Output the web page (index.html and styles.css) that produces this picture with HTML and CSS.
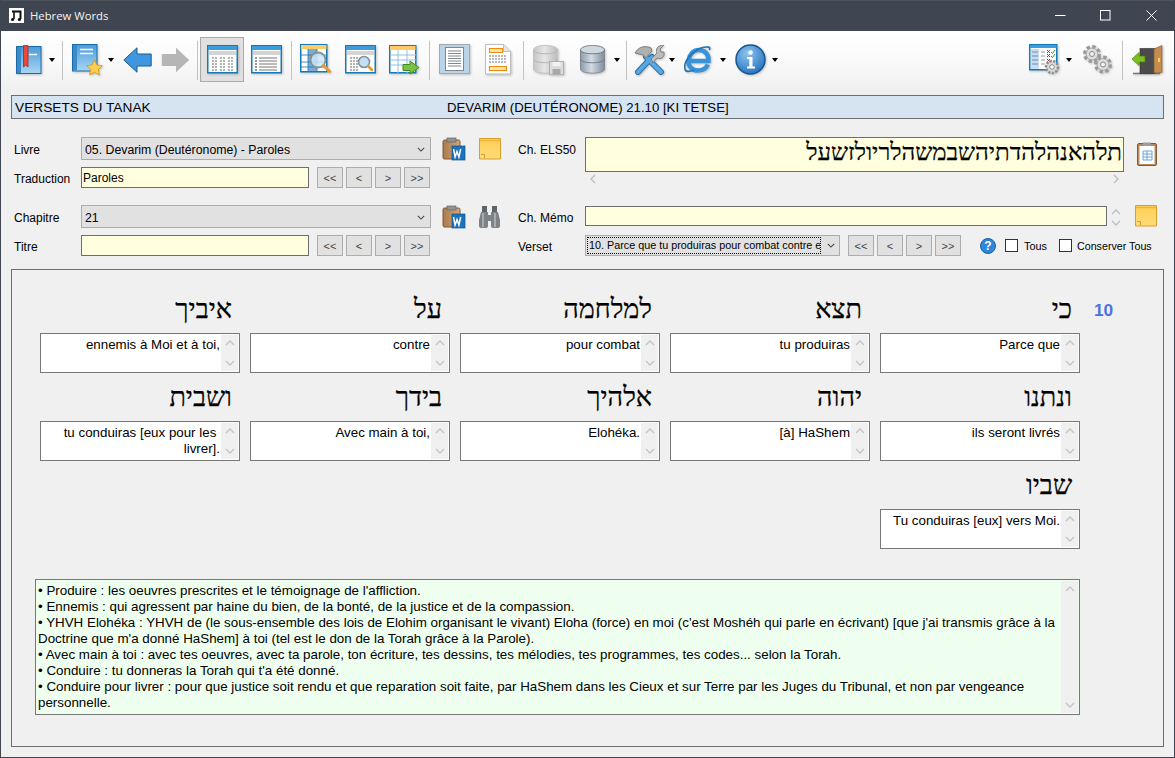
FILE: index.html
```html
<!DOCTYPE html>
<html lang="fr">
<head>
<meta charset="utf-8">
<title>Hebrew Words</title>
<link rel="stylesheet" href="styles.css">
</head>
<body>
<svg class="defs" aria-hidden="true">
  <defs>
    <linearGradient id="gBook" x1="0" y1="0" x2="0" y2="1"><stop offset="0" stop-color="#4a9bd9"/><stop offset="1" stop-color="#a9d6f3"/></linearGradient>
    <linearGradient id="gDb" x1="0" y1="0" x2="1" y2="0"><stop offset="0" stop-color="#8d9aa8"/><stop offset=".45" stop-color="#d3dbe3"/><stop offset="1" stop-color="#7f8c9a"/></linearGradient>
    <linearGradient id="gDbOff" x1="0" y1="0" x2="1" y2="0"><stop offset="0" stop-color="#c4c4c4"/><stop offset=".45" stop-color="#e6e6e6"/><stop offset="1" stop-color="#bcbcbc"/></linearGradient>
    <linearGradient id="gNote" x1="0" y1="0" x2="0" y2="1"><stop offset="0" stop-color="#ffcf55"/><stop offset="1" stop-color="#ffdb78"/></linearGradient>
    <radialGradient id="gInfo" cx=".4" cy=".3" r=".8"><stop offset="0" stop-color="#8cc4f0"/><stop offset="1" stop-color="#1f6cb8"/></radialGradient>
    <linearGradient id="gClip" x1="0" y1="0" x2="1" y2="0"><stop offset="0" stop-color="#a87a4c"/><stop offset="1" stop-color="#d6a878"/></linearGradient>
    <symbol id="chev-d" viewBox="0 0 10 6"><path d="M1 1l4 4 4-4" fill="none" stroke="currentColor" stroke-width="1.3"/></symbol>
    <symbol id="chev-u" viewBox="0 0 10 6"><path d="M1 5l4-4 4 4" fill="none" stroke="currentColor" stroke-width="1.3"/></symbol>
    <symbol id="chev-l" viewBox="0 0 6 10"><path d="M5 1L1 5l4 4" fill="none" stroke="currentColor" stroke-width="1.3"/></symbol>
    <symbol id="chev-r" viewBox="0 0 6 10"><path d="M1 1l4 4-4 4" fill="none" stroke="currentColor" stroke-width="1.3"/></symbol>
    <symbol id="clip-word" viewBox="0 0 24 24">
      <rect x="1" y="3" width="17" height="19" rx="1.5" fill="url(#gClip)" stroke="#7d5a38"/>
      <rect x="5" y="1" width="9" height="4" fill="#8f9297" stroke="#62656a" stroke-width=".7"/>
      <rect x="10" y="9" width="13" height="14" fill="#1c73bd" stroke="#0f4f8a" stroke-width=".7"/>
      <path d="M11.5 12l1.6 8 1.9-5.5 1.9 5.5 1.8-8" fill="none" stroke="#fff" stroke-width="1.5"/>
    </symbol>
    <symbol id="note" viewBox="0 0 22 22">
      <path d="M.5.5h21v20.5H.5z" fill="url(#gNote)" stroke="#d99f2d"/>
      <path d="M1 2.5h20" stroke="#eeb53e" stroke-width="1.5"/>
      <path d="M2 16.5h3.5V20" fill="none" stroke="#c98f20" stroke-width=".8"/>
    </symbol>
  </defs>
</svg>
<div class="window">
  <header class="titlebar">
    <svg class="app-icon" width="15" height="15" viewBox="0 0 15 15"><rect width="15" height="15" fill="#fff"/><path d="M3 3.500h8.500V11" fill="none" stroke="#111" stroke-width="2"/><path d="M5 3.500V11" stroke="#111" stroke-width="1.600"/><circle cx="3.600" cy="11.500" r="1.600" fill="#111"/><circle cx="10.400" cy="11.500" r="1.600" fill="#111"/></svg>
    <span class="app-title">Hebrew Words</span>
    <div class="winctl">
      <span class="winbtn"><svg width="11" height="11" viewBox="0 0 11 11"><path d="M0 5.5h10.500" stroke="#fff"/></svg></span>
      <span class="winbtn"><svg width="11" height="11" viewBox="0 0 11 11"><rect x=".5" y=".5" width="9.500" height="9.500" fill="none" stroke="#fff"/></svg></span>
      <span class="winbtn"><svg width="11" height="11" viewBox="0 0 11 11"><path d="M.5.5l10 10M10.500.5l-10 10" stroke="#fff"/></svg></span>
    </div>
  </header>

  <nav class="toolbar">
    <span class="tb w39"><svg width="26" height="30" viewBox="0 0 26 30"><rect x=".5" y="1.500" width="24.500" height="27" fill="url(#gBook)" stroke="#1d6ba6"/><rect x="1" y="2" width="4" height="26" fill="#3a8cc9"/><path d="M13 9.500h8" stroke="#fff" stroke-width="1.400"/><path d="M7.500.5h4.500V22l-2.200-2-2.300 2z" fill="#e8493a" stroke="#a8281c" stroke-width=".8"/></svg></span>
    <span class="dd w8"></span>
    <span class="sep ml6 mr5"></span>
    <span class="tb w38"><svg width="31" height="32" viewBox="0 0 31 32"><rect x=".5" y=".5" width="24.500" height="26.500" fill="url(#gBook)" stroke="#1d6ba6"/><rect x="1" y="1" width="4" height="25.500" fill="#3a8cc9"/><path d="M8 5.500h13M8 9.500h13" stroke="#fff" stroke-width="1.300"/><path d="M22.500 16l2.400 4.900 5.400.8-3.900 3.800.9 5.400-4.800-2.500-4.800 2.500.9-5.400-3.900-3.800 5.400-.8z" fill="#ffcd4a" stroke="#c8932a" stroke-width=".8"/></svg></span>
    <span class="dd w10"></span>
    <span class="tb w42 flat"><svg width="29" height="26" viewBox="0 0 29 26"><path d="M.8 13L14 .8V7h14.200v12H14v6.200z" fill="#3f97df" stroke="#1d5c8f"/></svg></span>
    <span class="tb w34 flat"><svg width="29" height="26" viewBox="0 0 29 26"><path d="M28.200 13L15 .8V7H.8v12H15v6.200z" fill="#b6b6b6"/></svg></span>
    <span class="sep ml5 mr2"></span>
    <span class="tb w44 selected"><svg width="31" height="29" viewBox="0 0 31 29"><rect x=".75" y=".75" width="29.500" height="27" fill="#fff" stroke="#157bb8" stroke-width="1.500"/><rect x="1" y="1" width="29" height="4" fill="#3d9cdc"/><rect x="2" y="6" width="27" height="4" fill="#d4d4d4"/><path d="M5 13h6M13 13h6M21 13h6M5 16h6M13 16h6M21 16h6M5 19h6M13 19h6M21 19h6M5 22h6M13 22h6M21 22h6M5 25h6M13 25h6M21 25h6" stroke="#666" stroke-dasharray="2 1"/></svg></span>
    <span class="tb w44"><svg width="31" height="29" viewBox="0 0 31 29"><rect x=".75" y=".75" width="29.500" height="27" fill="#fff" stroke="#157bb8" stroke-width="1.500"/><rect x="1" y="1" width="29" height="4" fill="#3d9cdc"/><rect x="2" y="6" width="27" height="4" fill="#d4d4d4"/><path d="M8 13h18M8 16h18M8 19h18M8 22h18M8 25h18" stroke="#777"/><path d="M4 13h2M4 16h2M4 19h2M4 22h2M4 25h2" stroke="#333"/></svg></span>
    <span class="sep ml3 mr2"></span>
    <span class="tb w44"><svg width="32" height="32" viewBox="0 0 32 32"><rect x=".75" y=".75" width="26" height="27" fill="#fff" stroke="#157bb8" stroke-width="1.500"/><rect x="1" y="1" width="25.500" height="4" fill="#ffcb66"/><rect x="8" y="5" width="9" height="22" fill="#7ba9d8"/><path d="M1 11h26M1 18h26M1 23h26M8 5v22M17 5v22" stroke="#157bb8" stroke-width=".8"/><circle cx="18" cy="16" r="7.500" fill="#cde6f7" fill-opacity=".85" stroke="#8a8f94" stroke-width="1.800"/><path d="M23.500 21.500l6 6" stroke="#e69a2c" stroke-width="3" stroke-linecap="round"/></svg></span>
    <span class="tb w44"><svg width="31" height="29" viewBox="0 0 31 29"><rect x=".75" y=".75" width="29.500" height="27" fill="#fff" stroke="#157bb8" stroke-width="1.500"/><rect x="1" y="1" width="29" height="4" fill="#3d9cdc"/><rect x="2" y="6" width="27" height="4" fill="#d4d4d4"/><path d="M5 13h8M5 16h8M5 19h8M5 22h8M5 25h8" stroke="#666" stroke-dasharray="2 1"/><circle cx="19" cy="17" r="5.500" fill="#bfe0f6" stroke="#8a8f94" stroke-width="1.600"/><path d="M23 21l4 4" stroke="#e69a2c" stroke-width="2.600" stroke-linecap="round"/></svg></span>
    <span class="tb w44"><svg width="31" height="30" viewBox="0 0 31 30"><rect x=".75" y=".75" width="26" height="27" fill="#fff" stroke="#157bb8" stroke-width="1.500"/><rect x="1" y="1" width="25.500" height="4" fill="#ffcb66"/><path d="M1 10h26M1 15h26M1 20h26M9 5v23M18 5v23" stroke="#8fc0e4"/><path d="M14 19.500h7V16l9 6.500-9 6.500v-3.500h-7z" fill="#7cc242" stroke="#3f8a1c"/></svg></span>
    <span class="sep ml3 mr2"></span>
    <span class="tb w44"><svg width="31" height="31" viewBox="0 0 31 31"><rect x=".5" y=".5" width="30" height="29" fill="#b9d3e8" stroke="#a8a8a8"/><rect x="6.500" y="3.500" width="18" height="23" fill="#fff" stroke="#7d8790"/><path d="M9 7h13M9 9.500h13M9 12h13M9 14.500h13M9 17h13M9 19.500h13M9 22h13" stroke="#7d8790"/></svg></span>
    <span class="tb w44"><svg width="26" height="31" viewBox="0 0 26 31"><path d="M.5.5h18l7 7v22.500H.5z" fill="#fff" stroke="#bdbdbd"/><path d="M18.500.5v7h7" fill="#e6e6e6" stroke="#bdbdbd"/><rect x="4.500" y="4.500" width="13" height="4" fill="#ffe3ad" stroke="#ee8a10"/><rect x="4.500" y="22.500" width="17" height="4" fill="#ffe3ad" stroke="#ee8a10"/><path d="M4 12h18M4 15h18M4 18h18" stroke="#777" stroke-dasharray="2 1"/></svg></span>
    <span class="sep ml3 mr2"></span>
    <span class="tb w44"><svg width="31" height="30" viewBox="0 0 31 30"><path d="M.5 5c0-6 24-6 24 0v19c0 5.500-24 5.500-24 0z" fill="url(#gDbOff)" stroke="#c4c4c4"/><path d="M.5 5c0 5 24 5 24 0M.5 14c0 5 24 5 24 0" fill="none" stroke="#b4b4b4"/><rect x="16.500" y="16.500" width="14" height="13" fill="#dcdcdc" stroke="#b0b0b0"/><rect x="19.500" y="17" width="8" height="4" fill="#f2f2f2"/><rect x="19.500" y="24" width="8" height="5" fill="#a8a8a8"/></svg></span>
    <span class="tb w44"><svg width="25" height="30" viewBox="0 0 25 30"><path d="M.5 5c0-6 24-6 24 0v19c0 5.500-24 5.500-24 0z" fill="url(#gDb)" stroke="#7f8b97"/><ellipse cx="12.500" cy="5" rx="11.500" ry="3.800" fill="#cfd7df"/><path d="M.5 5c0 5 24 5 24 0M.5 14c0 5 24 5 24 0" fill="none" stroke="#6f7b87"/></svg></span>
    <span class="dd w5"></span>
    <span class="sep ml7 mr2"></span>
    <span class="tb w40"><svg width="31" height="30" viewBox="0 0 31 30"><path d="M12 12l15 15M18 12L4 27" stroke="#2a6ea8" stroke-width="6" stroke-linecap="round"/><path d="M12 12l15 15M18 12L4 27" stroke="#58a8e4" stroke-width="4" stroke-linecap="round"/><path d="M1 8C4 2 11 0 17 3l1 3-6 7-3-3C6 9 4 9 1 8z" fill="#b0b0b0" stroke="#6d6d6d" stroke-width=".8"/><path d="M17 14l6-6c-2-4 1-8 7-8l-4 4 1 3 3 0c1 5-3 8-7 6l-4 5z" fill="#bcbcbc" stroke="#6d6d6d" stroke-width=".8"/></svg></span>
    <span class="dd w5"></span>
    <span class="tb w44 ml2"><svg width="29" height="30" viewBox="0 0 29 30"><path d="M4 16h20.500c.5-7-4-11-9.500-11S5.500 9 4.500 15.500c-.7 5.500 3.500 10 9.500 10 4.500 0 8-2 10-6" fill="none" stroke="#3a93d8" stroke-width="4.600"/><path d="M25 5C28 2 23 1 17 3 9 6-1 16 1 24c.6 3 4 3 9 1" fill="none" stroke="#1f74ba" stroke-width="1.600"/></svg></span>
    <span class="dd w5"></span>
    <span class="tb w44 ml3"><svg width="31" height="31" viewBox="0 0 31 31"><circle cx="15.500" cy="15.500" r="14.500" fill="url(#gInfo)" stroke="#14568f" stroke-width="1.500"/><circle cx="15.500" cy="8.500" r="2.300" fill="#fff"/><path d="M12 13h5.500v9.500H20v2h-8v-2h2.300V15H12z" fill="#fff"/></svg></span>
    <span class="dd w6"></span>
    <span class="spacer"></span>
    <span class="tb w44"><svg width="31" height="31" viewBox="0 0 31 31"><rect x=".75" y=".75" width="27" height="25" fill="#fff" stroke="#157bb8" stroke-width="1.500"/><rect x="1" y="1" width="26.500" height="3" fill="#3d9cdc"/><rect x="2" y="5" width="8" height="20" fill="#c9dcee"/><path d="M3 8h6M3 12h6M3 16h6M3 20h6" stroke="#5a8fc0"/><path d="M12 8h4M12 12h4M12 16h4M12 20h4" stroke="#999"/><path d="M18 6l3 3M21 6l-3 3M18 10l3 3M21 10l-3 3M18 15l3 3M21 15l-3 3" stroke="#cc2a20"/><path d="M22 8l1.500 1.500L26 6M22 12l1.500 1.500L26 10" fill="none" stroke="#3f9a2c"/><circle cx="23" cy="23" r="6" fill="#dcdcdc" stroke="#8d8d8d" stroke-width="2.600" stroke-dasharray="2.200 1.400"/><circle cx="23" cy="23" r="2.300" fill="#fff" stroke="#888"/></svg></span>
    <span class="dd w5"></span>
    <span class="tb w44 ml4"><svg width="31" height="31" viewBox="0 0 31 31"><circle cx="10" cy="10" r="7" fill="#d9d9d9" stroke="#9a9a9a" stroke-width="4" stroke-dasharray="3.200 2.300"/><circle cx="10" cy="10" r="5.800" fill="#dedede" stroke="#999" stroke-width=".6"/><circle cx="10" cy="10" r="2.500" fill="#f2f2f2" stroke="#888"/><circle cx="21" cy="20.500" r="7" fill="#d9d9d9" stroke="#9a9a9a" stroke-width="4" stroke-dasharray="3.200 2.300"/><circle cx="21" cy="20.500" r="5.800" fill="#dedede" stroke="#999" stroke-width=".6"/><circle cx="21" cy="20.500" r="2.500" fill="#f2f2f2" stroke="#888"/></svg></span>
    <span class="sep ml3 mr2"></span>
    <span class="tb w44"><svg width="31" height="30" viewBox="0 0 31 30"><path d="M1 28.500h27" stroke="#777" stroke-width="1.500"/><rect x="8" y="3.500" width="15" height="25" fill="#4b4b4b" stroke="#333" stroke-width=".6"/><path d="M22 4l8-3.500v27L22 28z" fill="#c48c50" stroke="#8a5d30" stroke-width=".7"/><rect x="26" y="13" width="2" height="4" fill="#ffd24a"/><path d="M0 14l7-6.500V11h6v6H7v3.500z" fill="#7dc11f" stroke="#4c8510" stroke-width=".7"/></svg></span>
  </nav>

  <div class="strip"><span class="strip-left">VERSETS DU TANAK</span><span class="strip-center">DEVARIM (DEUTÉRONOME) 21.10 [KI TETSE]</span></div>

  <section class="form">
    <div class="form-block">
      <label class="lbl row1">Livre</label>
      <div class="combo w350 row1"><span>05. Devarim (Deutéronome) - Paroles</span><svg class="combo-chev" width="8" height="5"><use href="#chev-d"/></svg></div>
      <div class="icons row1"><svg width="24" height="24"><use href="#clip-word"/></svg><svg class="ml13" width="22" height="22"><use href="#note"/></svg></div>
      <label class="lbl row1">Ch. ELS50</label>
      <div class="els-wrap">
        <div class="els-col">
          <div class="els" dir="rtl" lang="he">תלהאנהלהדתיהשבמשהלריולזשעל</div>
          <div class="hscroll"><svg width="6" height="10"><use href="#chev-l"/></svg><svg width="6" height="10"><use href="#chev-r"/></svg></div>
        </div>
        <svg class="clip-table" width="20" height="24" viewBox="0 0 20 24"><rect x=".5" y="1.500" width="19" height="22" rx="1.500" fill="#b98a5c" stroke="#7d5a38"/><rect x="2.500" y="4" width="15" height="18" fill="#fff"/><rect x="6" y=".5" width="8" height="3.500" fill="#9a9da2"/><path d="M6 9h9M6 12h9M6 15h9M6 18h9" stroke="#6aa7d8"/><path d="M6 9v9M10 9v9M15 9v9" stroke="#6aa7d8"/></svg>
      </div>
      <label class="lbl row2">Traduction</label>
      <div class="navline row2"><input class="field w228" value="Paroles" readonly><div class="nav ml8"><button>&lt;&lt;</button><button>&lt;</button><button>&gt;</button><button>&gt;&gt;</button></div></div>
    </div>

    <div class="form-block">
      <label class="lbl row1">Chapitre</label>
      <div class="combo w350 row1"><span>21</span><svg class="combo-chev" width="8" height="5"><use href="#chev-d"/></svg></div>
      <div class="icons row1"><svg width="24" height="24"><use href="#clip-word"/></svg><svg class="ml13" width="21" height="23" viewBox="0 0 21 23"><path d="M3 1h5v6H3zM13 1h5v6h-5z" fill="#5f6468"/><path d="M2 7h7v3h3V7h7l2 8v6a2 2 0 0 1-2 2h-5a2 2 0 0 1-2-2v-5h-3v5a2 2 0 0 1-2 2H2a2 2 0 0 1-2-2v-6z" fill="#7d8286"/><path d="M4 8v14M16 8v14" stroke="#b8bcbf" stroke-width="1.500"/></svg></div>
      <label class="lbl row1">Ch. Mémo</label>
      <div class="memo-row row1">
        <input class="field memo" readonly>
        <div class="spin"><svg width="10" height="6"><use href="#chev-u"/></svg><svg width="10" height="6"><use href="#chev-d"/></svg></div>
        <svg class="ml5" width="22" height="22"><use href="#note"/></svg>
      </div>
      <label class="lbl row2">Titre</label>
      <div class="navline row2"><input class="field w228" readonly><div class="nav ml8"><button>&lt;&lt;</button><button>&lt;</button><button>&gt;</button><button>&gt;&gt;</button></div></div>
      <div class="icons row2"></div>
      <label class="lbl row2">Verset</label>
      <div class="verset-row row2">
        <div class="combo w255"><span class="focus">10. Parce que tu produiras pour combat contre e</span><svg class="combo-chev" width="8" height="5"><use href="#chev-d"/></svg></div>
        <div class="nav ml8"><button>&lt;&lt;</button><button>&lt;</button><button>&gt;</button><button>&gt;&gt;</button></div>
        <svg class="help" width="16" height="16" viewBox="0 0 16 16"><circle cx="8" cy="8" r="7.500" fill="#2f86dc" stroke="#1b5fa8"/><text x="8" y="12" text-anchor="middle" class="help-q">?</text></svg>
        <span class="check"></span><span class="chk-label">Tous</span>
        <span class="check ml12"></span><span class="chk-label chk-gap">Conserver Tous</span>
      </div>
    </div>
  </section>

  <main class="panel">
    <div class="verse">
      <div class="words">
        <div class="word"><div class="heb" lang="he">כי</div><div class="tbox"><div class="tbox-text">Parce que</div><div class="vsb"><svg width="10" height="6"><use href="#chev-u"/></svg><svg width="10" height="6"><use href="#chev-d"/></svg></div></div></div>
        <div class="word"><div class="heb" lang="he">תצא</div><div class="tbox"><div class="tbox-text">tu produiras</div><div class="vsb"><svg width="10" height="6"><use href="#chev-u"/></svg><svg width="10" height="6"><use href="#chev-d"/></svg></div></div></div>
        <div class="word"><div class="heb" lang="he">למלחמה</div><div class="tbox"><div class="tbox-text">pour combat</div><div class="vsb"><svg width="10" height="6"><use href="#chev-u"/></svg><svg width="10" height="6"><use href="#chev-d"/></svg></div></div></div>
        <div class="word"><div class="heb" lang="he">על</div><div class="tbox"><div class="tbox-text">contre</div><div class="vsb"><svg width="10" height="6"><use href="#chev-u"/></svg><svg width="10" height="6"><use href="#chev-d"/></svg></div></div></div>
        <div class="word"><div class="heb" lang="he">איביך</div><div class="tbox"><div class="tbox-text">ennemis à Moi et à toi,</div><div class="vsb"><svg width="10" height="6"><use href="#chev-u"/></svg><svg width="10" height="6"><use href="#chev-d"/></svg></div></div></div>
        <div class="word"><div class="heb" lang="he">ונתנו</div><div class="tbox"><div class="tbox-text">ils seront livrés</div><div class="vsb"><svg width="10" height="6"><use href="#chev-u"/></svg><svg width="10" height="6"><use href="#chev-d"/></svg></div></div></div>
        <div class="word"><div class="heb" lang="he">יהוה</div><div class="tbox"><div class="tbox-text">[à] HaShem</div><div class="vsb"><svg width="10" height="6"><use href="#chev-u"/></svg><svg width="10" height="6"><use href="#chev-d"/></svg></div></div></div>
        <div class="word"><div class="heb" lang="he">אלהיך</div><div class="tbox"><div class="tbox-text">Elohéka.</div><div class="vsb"><svg width="10" height="6"><use href="#chev-u"/></svg><svg width="10" height="6"><use href="#chev-d"/></svg></div></div></div>
        <div class="word"><div class="heb" lang="he">בידך</div><div class="tbox"><div class="tbox-text">Avec main à toi,</div><div class="vsb"><svg width="10" height="6"><use href="#chev-u"/></svg><svg width="10" height="6"><use href="#chev-d"/></svg></div></div></div>
        <div class="word"><div class="heb" lang="he">ושבית</div><div class="tbox"><div class="tbox-text">tu conduiras [eux pour les&nbsp;<br>livrer].</div><div class="vsb"><svg width="10" height="6"><use href="#chev-u"/></svg><svg width="10" height="6"><use href="#chev-d"/></svg></div></div></div>
        <div class="word"><div class="heb" lang="he">שביו</div><div class="tbox"><div class="tbox-text">Tu conduiras [eux] vers Moi.</div><div class="vsb"><svg width="10" height="6"><use href="#chev-u"/></svg><svg width="10" height="6"><use href="#chev-d"/></svg></div></div></div>
      </div>
      <div class="verse-num">10</div>
    </div>
    <div class="notes">
      <div class="notes-text">• Produire : les oeuvres prescrites et le témoignage de l'affliction.<br>• Ennemis : qui agressent par haine du bien, de la bonté, de la justice et de la compassion.<br>• YHVH Elohéka : YHVH de (le sous-ensemble des lois de Elohim organisant le vivant) Eloha (force) en moi (c'est Moshéh qui parle en écrivant) [que j'ai transmis grâce à la<br>Doctrine que m'a donné HaShem] à toi (tel est le don de la Torah grâce à la Parole).<br>• Avec main à toi : avec tes oeuvres, avec ta parole, ton écriture, tes dessins, tes mélodies, tes programmes, tes codes... selon la Torah.<br>• Conduire : tu donneras la Torah qui t'a été donné.<br>• Conduire pour livrer : pour que justice soit rendu et que reparation soit faite, par HaShem dans les Cieux et sur Terre par les Juges du Tribunal, et non par vengeance<br>personnelle.</div>
      <div class="vsb"><svg width="10" height="6"><use href="#chev-u"/></svg><svg width="10" height="6"><use href="#chev-d"/></svg></div>
    </div>
  </main>
</div>
</body>
</html>
```
FILE: styles.css
```css
* { box-sizing: border-box; }
html, body { margin: 0; padding: 0; }
body {
  width: 1175px;
  height: 758px;
  overflow: hidden;
  background: #f0f0f0;
  font-family: "Liberation Sans", Arial, sans-serif;
  font-size: 12px;
  color: #000;
}
.defs { display: block; width: 0; height: 0; }
.window {
  width: 1175px;
  height: 758px;
  border: 1px solid #3f4651;
  border-top: 0;
  display: flex;
  flex-direction: column;
}

/* title bar */
.titlebar {
  height: 31px;
  flex: none;
  background: #3f4652;
  border-top: 1px solid #4d535d;
  display: flex;
  align-items: center;
  color: #f2f2f2;
  padding: 0 0 1px 8px;
}
.app-icon { flex: none; }
.app-title { margin-left: 6px; font: 11.3px "Open Sans", "Noto Sans", sans-serif; }
.winctl { margin-left: auto; display: flex; }
.winbtn { width: 45px; height: 29px; display: flex; align-items: center; justify-content: center; }
.winbtn:last-child { width: 46px; }
.winbtn svg { display: block; }

/* toolbar */
.toolbar {
  height: 58px;
  flex: none;
  padding: 6px 5px 0 8px;
  background: linear-gradient(#ffffff 0, #fafafa 50%, #f0f0f0 100%);
  display: flex;
  align-items: flex-start;
}
.tb {
  height: 45px;
  flex: none;
  display: flex;
  align-items: center;
  justify-content: center;
  border: 1px solid transparent;
}
.tb svg { display: block; flex: none; filter: drop-shadow(1px 1px 1px rgba(0, 0, 0, .22)); }
.tb.flat svg { filter: none; }
.tb.selected { background: #e0e0e0; border-color: #a9a9a9; }
.w34 { width: 34px; } .w38 { width: 38px; } .w39 { width: 39px; } .w40 { width: 40px; } .w42 { width: 42px; } .w44 { width: 44px; }
.dd { height: 45px; flex: none; display: flex; align-items: center; justify-content: center; }
.dd::after { content: ""; border: 3px solid transparent; border-top: 4px solid #000; border-bottom: 0; }
.w5 { width: 5px; } .w6 { width: 6px; } .w8 { width: 8px; } .w10 { width: 10px; }
.sep { width: 1px; height: 39px; margin-top: 4px; background: #c4c4c4; flex: none; }
.ml2 { margin-left: 2px; } .ml3 { margin-left: 3px; } .ml4 { margin-left: 4px; } .ml5 { margin-left: 5px; }
.ml6 { margin-left: 6px; } .ml7 { margin-left: 7px; } .ml8 { margin-left: 8px; } .ml12 { margin-left: 12px; } .ml13 { margin-left: 13px; }
.mr2 { margin-right: 2px; } .mr5 { margin-right: 5px; }
.spacer { flex: 1; }

/* header strip */
.strip {
  margin: 6px 10px 0;
  height: 24px;
  flex: none;
  background: #d6e4f1;
  border: 1px solid #6e6e6e;
  display: grid;
  grid-template-columns: 432px 1fr;
  align-items: center;
  padding-left: 3px;
}
.strip-left { font-size: 13.7px; }
.strip-center { font-size: 13.2px; }

/* form */
.form { padding: 18px 0 0 13px; flex: none; }
.form-block {
  display: grid;
  grid-template-columns: 67px 350px 87px 67px 539px;
  grid-template-rows: 23px 21px;
  row-gap: 7px;
  margin-bottom: 17px;
}
.form-block:last-child { margin-bottom: 0; }
.lbl { display: flex; align-items: center; font-size: 12px; padding-top: 2px; }
.row1 { grid-row: 1; }
.row2 { grid-row: 2; }
.combo {
  display: flex;
  align-items: center;
  background: #e1e1e1;
  border: 1px solid #acacac;
  padding: 2px 5px 0 3px;
  min-width: 0;
  font-size: 12.3px;
}
.combo > span { flex: 1; white-space: nowrap; overflow: hidden; min-width: 0; }
.combo-chev { flex: none; color: #444; margin-left: 6px; }
.w350 { width: 350px; }
.w255 { width: 255px; height: 21px; flex: none; padding: 1px 4px 1px 1px; font-size: 10.8px; }
.focus { border: 1px dotted #000; line-height: 15px; padding-left: 1px; }
.icons { display: flex; align-items: center; padding-left: 11px; }
.icons svg { flex: none; }
.field {
  height: 21px;
  border: 1px solid #6e6e6e;
  background: #ffffdf;
  font: 12px "Liberation Sans", Arial, sans-serif;
  padding: 0 1px;
  margin: 0;
  outline: 0;
  border-radius: 0;
  color: #000;
}
.w228 { width: 228px; flex: none; }
.navline { display: flex; }
.nav { display: flex; gap: 3px; flex: none; }
.nav button {
  width: 26px;
  height: 21px;
  padding: 0;
  background: #e1e1e1;
  border: 1px solid #adadad;
  border-radius: 0;
  font: 11px "Liberation Sans", Arial, sans-serif;
  color: #444;
}
.els-wrap { grid-column: 5; grid-row: 1 / span 2; display: flex; width: 575px; }
.els-col { width: 539px; flex: none; }
.els {
  height: 35px;
  border: 1px solid #6e6e6e;
  background: #ffffdf;
  font: 24px/29px "Liberation Serif", "Times New Roman", serif;
  -webkit-text-stroke: .25px #000;
  padding-right: 1px;
  white-space: nowrap;
  overflow: hidden;
}
.hscroll {
  height: 13px;
  color: #bdbdbd;
  display: flex;
  align-items: center;
  justify-content: space-between;
  padding: 0 5px;
}
.clip-table { margin: 5px 0 0 13px; flex: none; }
.memo-row { grid-column: 5; display: flex; align-items: flex-start; width: 575px; }
.memo { width: 522px; height: 20px; margin-top: 1px; flex: none; }
.spin { width: 23px; height: 22px; margin-top: 1px; color: #bdbdbd; display: flex; flex-direction: column; align-items: center; justify-content: space-between; flex: none; padding: 3px 6px 2px 0; }
.verset-row { grid-column: 5; display: flex; align-items: center; width: 575px; }
.help { margin-left: 19px; flex: none; }
.help-q { font: bold 12px "Liberation Sans", sans-serif; fill: #fff; }
.check { width: 13px; height: 13px; background: #fff; border: 1px solid #333; margin-left: 9px; flex: none; }
.chk-label { margin-left: 6px; font-size: 10.9px; white-space: nowrap; }
.chk-gap { margin-left: 5px; font-size: 10.7px; }
.check.ml12 { margin-left: 12px; }

/* main panel */
.panel {
  margin: 13px 10px 0;
  height: 478px;
  flex: none;
  border: 1px solid #6e6e6e;
  padding: 15px 0 0 28px;
}
.verse { display: flex; align-items: flex-start; }
.words {
  direction: rtl;
  display: grid;
  grid-template-columns: repeat(5, 200px);
  column-gap: 10px;
  width: 1040px;
  flex: none;
}
.word { direction: ltr; height: 88px; display: flex; flex-direction: column; }
.heb {
  height: 48px;
  flex: none;
  text-align: right;
  padding-right: 8px;
  font: 27px/48px "Liberation Serif", "Times New Roman", serif;
  -webkit-text-stroke: .25px #000;
}
.tbox {
  height: 40px;
  flex: none;
  display: flex;
  background: #fff;
  border: 1px solid #777;
}
.tbox-text { flex: 1; min-width: 0; text-align: right; padding: 3px 0 0 8px; font-size: 13.33px; line-height: 16px; }
.vsb {
  width: 17px;
  flex: none;
  margin: 1px;
  background: #f0f0f0;
  color: #c4c4c4;
  display: flex;
  flex-direction: column;
  align-items: center;
  justify-content: space-between;
  padding: 5px 0;
}
.vsb svg { display: block; }
.verse-num { margin: 16px 0 0 14px; font: bold 17.3px/18px "Liberation Sans", sans-serif; color: #4a72e0; }
.notes {
  margin: 30px 0 0 -5px;
  width: 1045px;
  height: 136px;
  display: flex;
  background: #efffef;
  border: 1px solid #777;
}
.notes-text { flex: 1; padding: 3px 2px; font-size: 13.37px; line-height: 16px; white-space: nowrap; }
```
